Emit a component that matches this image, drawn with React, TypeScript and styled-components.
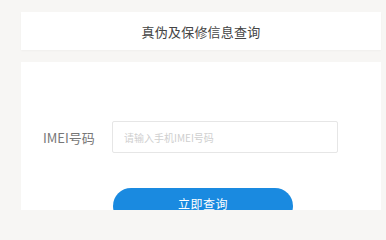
import React from "react";
import styled, { createGlobalStyle } from "styled-components";

const Global = createGlobalStyle`
  html, body {
    margin: 0;
    padding: 0;
    background: #f7f6f4;
    overflow: hidden;
  }
  body {
    font-family: "Noto Sans CJK SC", "Noto Sans", "Liberation Sans", sans-serif;
  }
`;

const Page = styled.div`
  display: flex;
  flex-direction: column;
  gap: 12px;
  padding: 12px 5px 0 21px;
  height: 210px;
  overflow: hidden;
  box-sizing: border-box;
`;

const HeaderCard = styled.div`
  flex-shrink: 0;
  background: #ffffff;
  height: 38px;
  display: flex;
  align-items: center;
  justify-content: center;
  box-shadow: 0 1px 2px rgba(0, 0, 0, 0.03);
`;

const Title = styled.h1`
  margin: 0;
  font-size: 13px;
  font-weight: 400;
  color: #444444;
  letter-spacing: 0.2px;
  line-height: 1;
`;

const BodyCard = styled.div`
  flex-shrink: 0;
  background: #ffffff;
  min-height: 180px;
  padding: 59px 0 0 22px;
  display: flex;
  flex-direction: column;
`;

const Row = styled.div`
  display: flex;
  align-items: center;
`;

const Label = styled.label`
  width: 69px;
  font-size: 13px;
  color: #777777;
  line-height: 1;
`;

const Input = styled.input`
  width: 226px;
  height: 32px;
  box-sizing: border-box;
  border: 1px solid #e6e6e6;
  border-radius: 2px;
  padding: 0 11px;
  font-size: 10px;
  font-family: inherit;
  color: #333;
  outline: none;
  &::placeholder {
    color: #cfcfcf;
  }
`;

const ButtonRow = styled.div`
  padding-left: 70px;
  margin-top: 35px;
`;

const Button = styled.button`
  width: 180px;
  height: 36px;
  border: none;
  border-radius: 18px;
  background: #1a8ae0;
  color: #ffffff;
  font-size: 12px;
  font-family: inherit;
  letter-spacing: 0.5px;
  cursor: pointer;
  padding: 0 0 6px;
  display: flex;
  align-items: center;
  justify-content: center;
`;

const Under = styled.span`
  text-decoration: underline;
`;

export default function App() {
  return (
    <>
      <Global />
      <Page>
        <HeaderCard>
          <Title>真伪及保修信息查询</Title>
        </HeaderCard>
        <BodyCard>
          <Row>
            <Label>IMEI号码</Label>
            <Input placeholder="请输入手机IMEI号码" />
          </Row>
          <ButtonRow>
            <Button>
              立即<Under>查询</Under>
            </Button>
          </ButtonRow>
        </BodyCard>
      </Page>
    </>
  );
}
